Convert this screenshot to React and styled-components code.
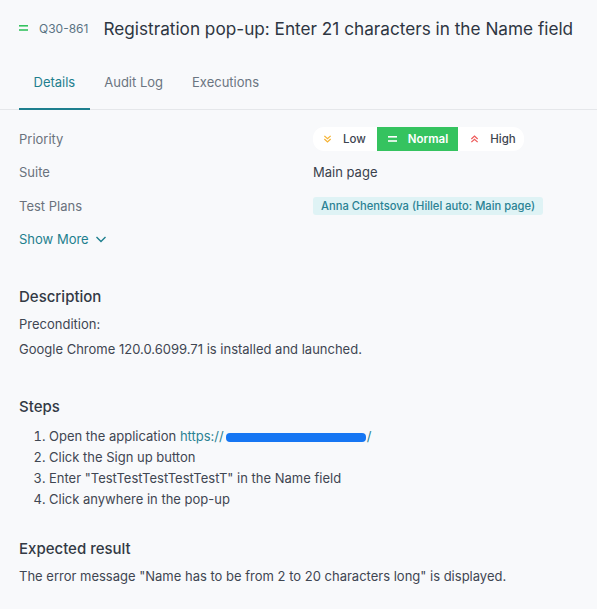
import React from "react";
import styled, { createGlobalStyle } from "styled-components";

const Global = createGlobalStyle`
  html, body { margin: 0; padding: 0; background: #f8f9fb; }
  body { font-family: Inter, "Noto Sans", sans-serif; color: #3a414c; }
`;

const Page = styled.div`
  width: 597px;
  min-height: 609px;
  background: #f8f9fb;
  box-sizing: border-box;
`;

const Header = styled.div`
  display: flex;
  align-items: center;
  padding: 17px 19px 0 19px;
  height: 22px;
`;

const Code = styled.span`
  font-size: 12px;
  color: #5b7484;
  margin-left: 11px;
`;

const Title = styled.h1`
  margin: 0 0 0 15px;
  font-size: 17.2px;
  font-weight: 400;
  color: #2e3642;
  white-space: nowrap;
`;

const Tabs = styled.div`
  display: flex;
  margin-top: 35px;
  padding: 0 19px;
  border-bottom: 1px solid #e5e7ea;
`;

const Tab = styled.div`
  font-size: 13px;
  padding: 0 14.5px 18px;
  margin-bottom: -1px;
  color: ${(p) => (p.$active ? "#1e7f8e" : "#6b7581")};
  border-bottom: 2px solid ${(p) => (p.$active ? "#1e7f8e" : "transparent")};
`;

const Props = styled.div`
  display: grid;
  grid-template-columns: 294px 1fr;
  grid-auto-rows: 33.5px;
  align-items: center;
  padding: 12px 19px 0;
`;

const Label = styled.div`
  font-size: 13px;
  color: #6a727d;
`;

const Value = styled.div`
  font-size: 13px;
  color: #3a414c;
`;

const Segmented = styled.div`
  display: inline-flex;
  background: #ffffff;
  border-radius: 11px;
  height: 24px;
  align-items: stretch;
  gap: 4px;
`;

const Seg = styled.div`
  display: flex;
  align-items: center;
  gap: 11px;
  padding: 0 ${(p) => p.$pr}px 0 ${(p) => p.$pl}px;
  font-size: 11.5px;
  font-weight: ${(p) => (p.$active ? 600 : 500)};
  color: ${(p) => (p.$active ? "#ffffff" : "#3d4450")};
  background: ${(p) => (p.$active ? "#35c35f" : "transparent")};
`;

const Tag = styled.span`
  display: inline-block;
  background: #dff3f5;
  color: #2a8294;
  font-size: 11.2px;
  font-weight: 500;
  padding: 2px 8px;
  border-radius: 3px;
`;

const ShowMore = styled.div`
  display: flex;
  align-items: center;
  gap: 6px;
  font-size: 13px;
  color: #1e7f8e;
`;

const Section = styled.section`
  padding: 0 19px;
  margin-top: ${(p) => p.$mt}px;
`;

const H2 = styled.h2`
  margin: 0;
  font-size: 15px;
  font-weight: 500;
  color: #333a45;
`;

const P = styled.p`
  margin: ${(p) => (p.$mt ? p.$mt : 0)}px 0 0;
  font-size: 13px;
  line-height: 21px;
  color: #3f4652;
`;

const List = styled.ol`
  margin: 10px 0 0;
  padding-left: 30px;
  font-size: 13px;
  line-height: 21px;
  color: #3f4652;
`;

const Link = styled.span`
  color: #2a8294;
`;

const Redact = styled.span`
  display: inline-block;
  width: 140px;
  height: 9px;
  background: #1676f3;
  border-radius: 4px;
  vertical-align: middle;
  margin: 0 1px 0 2px;
`;

const EqIcon = ({ color = "#35c35f", size = 9 }) => (
  <svg width={size} height={8} viewBox="0 0 9 8" preserveAspectRatio="none">
    <rect x="0" y="1" width="9" height="1.6" fill={color} />
    <rect x="0" y="5.2" width="9" height="1.6" fill={color} />
  </svg>
);

const Chevrons = ({ up, color }) => (
  <svg width="9" height="10" viewBox="0 0 10 10" fill="none" stroke={color} strokeWidth="1.4">
    {up ? (
      <>
        <polyline points="1.5,5 5,1.8 8.5,5" />
        <polyline points="1.5,8.5 5,5.3 8.5,8.5" />
      </>
    ) : (
      <>
        <polyline points="1.5,1.5 5,4.7 8.5,1.5" />
        <polyline points="1.5,5 5,8.2 8.5,5" />
      </>
    )}
  </svg>
);

export default function App() {
  return (
    <Page>
      <Global />
      <Header>
        <EqIcon />
        <Code>Q30-861</Code>
        <Title>Registration pop-up: Enter 21 characters in the Name field</Title>
      </Header>
      <Tabs>
        <Tab $active>Details</Tab>
        <Tab>Audit Log</Tab>
        <Tab>Executions</Tab>
      </Tabs>
      <Props>
        <Label>Priority</Label>
        <Value>
          <Segmented>
            <Seg $pl={10} $pr={7}>
              <Chevrons color="#f5b335" />
              Low
            </Seg>
            <Seg $active $pl={11} $pr={10}>
              <EqIcon color="#ffffff" size={9} />
              Normal
            </Seg>
            <Seg $pl={8} $pr={8}>
              <Chevrons up color="#ee5a5a" />
              High
            </Seg>
          </Segmented>
        </Value>
        <Label>Suite</Label>
        <Value>Main page</Value>
        <Label>Test Plans</Label>
        <Value>
          <Tag>Anna Chentsova (Hillel auto: Main page)</Tag>
        </Value>
        <ShowMore>
          Show More
          <svg width="12" height="12" viewBox="0 0 12 12" fill="none" stroke="#1e7f8e" strokeWidth="1.4">
            <polyline points="1.5,4 6,8.5 10.5,4" />
          </svg>
        </ShowMore>
      </Props>
      <Section $mt={31}>
        <H2>Description</H2>
        <P $mt={8}>Precondition:</P>
        <P $mt={4}>Google Chrome 120.0.6099.71 is installed and launched.</P>
      </Section>
      <Section $mt={37}>
        <H2>Steps</H2>
        <List>
          <li>
            Open the application <Link>https://<Redact />/</Link>
          </li>
          <li>Click the Sign up button</li>
          <li>Enter "TestTestTestTestTestT" in the Name field</li>
          <li>Click anywhere in the pop-up</li>
        </List>
      </Section>
      <Section $mt={29}>
        <H2>Expected result</H2>
        <P $mt={8}>The error message "Name has to be from 2 to 20 characters long" is displayed.</P>
      </Section>
    </Page>
  );
}
